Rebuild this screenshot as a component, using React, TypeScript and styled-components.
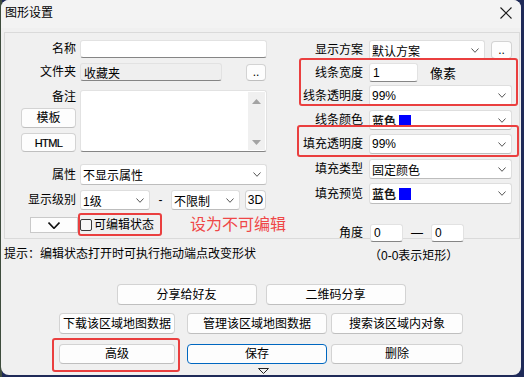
import React from 'react';
import styled, { createGlobalStyle, css } from 'styled-components';

const Global = createGlobalStyle`
  html, body { margin: 0; padding: 0; }
  body {
    width: 524px; height: 377px; overflow: hidden;
    background: linear-gradient(to right, #3e4c3d 0, #3e4c3d 2px, #1f2a58 2px);
    font-family: "Liberation Sans", "Noto Sans CJK SC", sans-serif;
    font-size: 12px; color: #000;
  }
  * { box-sizing: border-box; }
`;

const Window = styled.div`
  width: 520px; height: 375px; margin-left: 1px;
  background: #f0f0f0; border-radius: 8px; overflow: hidden;
  display: flex; flex-direction: column;
`;

const TitleBar = styled.div`
  height: 28px; flex: none; display: flex; align-items: center; justify-content: space-between;
  padding: 0 9px 2px 4px; background: #f3f3f3;
`;

const Title = styled.span`font-size: 12px; line-height: 14px;`;

const Panel = styled.div`
  height: 207px; flex: none; margin: 4px 1px 0 3px;
  border: 1px solid #dadada; display: flex; padding-top: 7px;
`;

const Column = styled.div<{ $w: number; $ml: number }>`
  width: ${p => p.$w}px; margin-left: ${p => p.$ml}px; flex: none;
  display: flex; flex-direction: column;
`;

const Row = styled.div<{ $mt: number; $h: number }>`
  display: flex; align-items: center; flex: none;
  height: ${p => p.$h}px; margin-top: ${p => p.$mt}px;
`;

const Label = styled.div<{ $w: number; $gap: number }>`
  width: ${p => p.$w}px; margin-right: ${p => p.$gap}px; flex: none;
  text-align: right; white-space: nowrap; line-height: 14px;
`;

const LabelStack = styled.div`
  width: 71px; margin-right: 4px; flex: none; height: 100%;
  display: flex; flex-direction: column; align-items: flex-end;
`;

const Field = styled.div<{ $w: number; $readonly?: boolean }>`
  width: ${p => p.$w}px; height: 100%; flex: none;
  background: ${p => (p.$readonly ? '#efefef' : '#ffffff')};
  border: 1px solid #e2e2e2; border-bottom-color: #858585; border-radius: 3px;
  padding-left: 3px; display: flex; align-items: center; white-space: nowrap;
`;

const SelectBox = styled.div<{ $w: number }>`
  width: ${p => p.$w}px; height: 100%; flex: none;
  background: #fff; border: 1px solid #dedede; border-bottom-color: #bdbdbd; border-radius: 3px;
  display: flex; align-items: center; justify-content: space-between;
  padding: 0 5px 0 2px; white-space: nowrap;
`;

const ColorName = styled.span`font-weight: 600; color: #1a1a1a;`;

const Swatch = styled.span`
  display: inline-block; width: 12px; height: 12px; background: #0000ff; margin-left: 3px; vertical-align: -1px;
`;

const Btn = styled.button<{ $w: number; $h: number; $ml?: number; $primary?: boolean }>`
  width: ${p => p.$w}px; height: ${p => p.$h}px; margin: 0 0 0 ${p => p.$ml ?? 0}px; flex: none;
  padding: 0; font: inherit; color: #000; line-height: 14px;
  background: #fdfdfd; border: 1px solid #d3d3d3; border-bottom-color: #bfbfbf; border-radius: 4px;
  display: flex; align-items: center; justify-content: center;
  ${p => p.$primary && css`border-color: #0067c0;`}
`;

const SmallText = styled.span`font-size: 11px; letter-spacing: -0.6px; -webkit-text-stroke: 0.2px #000;`;

const NoteArea = styled.div`
  width: 187px; height: 100%; flex: none; background: #fff;
  border: 1px solid #e2e2e2; border-bottom-color: #858585; border-radius: 3px;
  display: flex; justify-content: flex-end; padding: 1px 1px 1px 0;
`;

const ScrollBar = styled.div`
  width: 17px; height: 100%; background: #f0f0f0;
  display: flex; flex-direction: column; justify-content: space-between; align-items: center;
  padding: 7px 0 5px;
`;

const Dash = styled.div<{ $w: number }>`
  width: ${p => p.$w}px; flex: none; text-align: center;
`;

const DropButton = styled.div`
  width: 48px; height: 100%; margin-left: 25px; flex: none;
  border: 1px solid #c9c9c9; background: #fdfdfd;
  display: flex; align-items: center; justify-content: center;
`;

const Marked = styled.div<{ $t: number; $r: number; $b: number; $l: number; $ml?: number }>`
  position: relative; display: flex; align-items: center; flex: none;
  margin-left: ${p => p.$ml ?? 0}px;
  &::after {
    content: ''; position: absolute; pointer-events: none;
    top: ${p => p.$t}px; right: ${p => p.$r}px; bottom: ${p => p.$b}px; left: ${p => p.$l}px;
    border: 2px solid #ea3f3f; border-radius: 3px;
  }
`;

const Group = styled(Marked)`flex-direction: column; align-items: stretch;`;

const CheckBox = styled.span`
  width: 12px; height: 12px; flex: none; border: 1px solid #3a3a3a; border-radius: 2px; background: #f7f7f7;
`;

const CheckText = styled.span`margin-left: 2px; white-space: nowrap; line-height: 14px;`;

const WarnText = styled.span`
  margin-left: 36px; font-size: 16px; color: #ef4747; white-space: nowrap; flex: none; line-height: 18px;
`;

const Unit = styled.span`margin-left: 12px; font-size: 13px;`;

const HintRow = styled.div`
  height: 18px; margin-top: 6px; flex: none; padding-left: 3px;
  display: grid; grid-template-columns: 365px auto; align-items: center;
`;

const HintText = styled.span`white-space: nowrap; line-height: 14px;`;
const NoteText = styled.span`white-space: nowrap; line-height: 14px; padding-top: 4px;`;

const ButtonRow = styled.div<{ $mt: number; $center?: boolean }>`
  display: flex; flex: none; margin-top: ${p => p.$mt}px;
  padding-left: ${p => (p.$center ? 0 : 58)}px;
  justify-content: ${p => (p.$center ? 'center' : 'flex-start')};
  gap: ${p => (p.$center ? 9 : 0)}px;
`;

const MoreRow = styled.div`
  display: flex; flex: none; padding-left: 257px; margin-top: 4px;
`;

const Chevron = ({ w = 8, h = 5, sw = 1, color = '#555' }: { w?: number; h?: number; sw?: number; color?: string }) => (
  <svg width={w} height={h} viewBox={`0 0 ${w} ${h}`}>
    <path d={`M0.5 0.5 L${w / 2} ${h - 0.7} L${w - 0.5} 0.5`} fill="none" stroke={color} strokeWidth={sw} />
  </svg>
);

const Triangle = ({ up }: { up?: boolean }) => (
  <svg width="9" height="5" viewBox="0 0 9 5">
    <path d={up ? 'M0 5 L4.5 0 L9 5 Z' : 'M0 0 L4.5 5 L9 0 Z'} fill="#a3a3a3" />
  </svg>
);

const Select = ({ w, children }: { w: number; children: React.ReactNode }) => (
  <SelectBox $w={w}>
    <span>{children}</span>
    <Chevron />
  </SelectBox>
);

const Blue = () => (
  <>
    <ColorName>蓝色</ColorName>
    <Swatch />
  </>
);

export default function App() {
  return (
    <>
      <Global />
      <Window>
        <TitleBar>
          <Title>图形设置</Title>
          <svg width="12" height="12" viewBox="0 0 12 12">
            <path d="M0.5 0.5 L11.5 11.5 M11.5 0.5 L0.5 11.5" stroke="#1a1a1a" strokeWidth="1.1" />
          </svg>
        </TitleBar>

        <Panel>
          <Column $w={262} $ml={0}>
            <Row $mt={0} $h={18}>
              <Label $w={71} $gap={4}>名称</Label>
              <Field $w={187} />
            </Row>
            <Row $mt={5} $h={18}>
              <Label $w={71} $gap={4}>文件夹</Label>
              <Field $w={142} $readonly>收藏夹</Field>
              <Btn $w={20} $h={17} $ml={24}>..</Btn>
            </Row>
            <Row $mt={9} $h={62}>
              <LabelStack>
                <Label $w={71} $gap={0}>备注</Label>
                <Btn $w={55} $h={20} $ml={0} style={{ marginTop: 4 }}>模板</Btn>
                <Btn $w={55} $h={19} $ml={0} style={{ marginTop: 5 }}><SmallText>HTML</SmallText></Btn>
              </LabelStack>
              <NoteArea>
                <ScrollBar>
                  <Triangle up />
                  <Triangle />
                </ScrollBar>
              </NoteArea>
            </Row>
            <Row $mt={12} $h={21}>
              <Label $w={71} $gap={4}>属性</Label>
              <Select w={187}>不显示属性</Select>
            </Row>
            <Row $mt={5} $h={20}>
              <Label $w={71} $gap={4}>显示级别</Label>
              <Select w={70}>1级</Select>
              <Dash $w={21}>-</Dash>
              <Select w={69}>不限制</Select>
              <Btn $w={21} $h={20} $ml={5}>3D</Btn>
            </Row>
            <Row $mt={7} $h={16}>
              <DropButton>
                <Chevron w={12} h={7} sw={1.6} color="#111" />
              </DropButton>
              <Marked $t={-5} $r={-8} $b={-4} $l={-2} $ml={2}>
                <CheckBox />
                <CheckText>可编辑状态</CheckText>
              </Marked>
              <WarnText>设为不可编辑</WarnText>
            </Row>
          </Column>

          <Column $w={232} $ml={13}>
            <Row $mt={0} $h={20}>
              <Label $w={83} $gap={6}>显示方案</Label>
              <Select w={116}>默认方案</Select>
              <Btn $w={21} $h={18} $ml={6}>..</Btn>
            </Row>
            <Group $t={-2} $r={-6} $b={0} $l={19}>
              <Row $mt={3} $h={19}>
                <Label $w={83} $gap={6}>线条宽度</Label>
                <Field $w={49}>1</Field>
                <Unit>像素</Unit>
              </Row>
              <Row $mt={3} $h={21}>
                <Label $w={83} $gap={6}>线条透明度</Label>
                <Select w={143}>99%</Select>
              </Row>
            </Group>
            <Row $mt={4} $h={20}>
              <Label $w={83} $gap={6}>线条颜色</Label>
              <Select w={143}><Blue /></Select>
            </Row>
            <Group $t={-5} $r={-7} $b={-3} $l={17}>
              <Row $mt={4} $h={20}>
                <Label $w={83} $gap={6}>填充透明度</Label>
                <Select w={143}>99%</Select>
              </Row>
            </Group>
            <Row $mt={5} $h={20}>
              <Label $w={83} $gap={6}>填充类型</Label>
              <Select w={143}>固定颜色</Select>
            </Row>
            <Row $mt={4} $h={21}>
              <Label $w={83} $gap={6}>填充预览</Label>
              <Select w={143}><Blue /></Select>
            </Row>
            <Row $mt={20} $h={18}>
              <Label $w={83} $gap={7}>角度</Label>
              <Field $w={33}>0</Field>
              <Dash $w={28}>—</Dash>
              <Field $w={33}>0</Field>
            </Row>
          </Column>
        </Panel>

        <HintRow>
          <HintText>提示：编辑状态打开时可执行拖动端点改变形状</HintText>
          <NoteText>（0-0表示矩形）</NoteText>
        </HintRow>

        <ButtonRow $mt={21} $center>
          <Btn $w={140} $h={21}>分享给好友</Btn>
          <Btn $w={140} $h={21}>二维码分享</Btn>
        </ButtonRow>
        <ButtonRow $mt={8}>
          <Btn $w={116} $h={21}>下载该区域地图数据</Btn>
          <Btn $w={140} $h={21} $ml={12}>管理该区域地图数据</Btn>
          <Btn $w={132} $h={21} $ml={4}>搜索该区域内对象</Btn>
        </ButtonRow>
        <ButtonRow $mt={10}>
          <Marked $t={-6} $r={-5} $b={-8} $l={-7}>
            <Btn $w={116} $h={20}>高级</Btn>
          </Marked>
          <Btn $w={140} $h={20} $ml={12} $primary>保存</Btn>
          <Btn $w={132} $h={20} $ml={4}>删除</Btn>
        </ButtonRow>
        <MoreRow>
          <svg width="11" height="6" viewBox="0 0 11 6">
            <path d="M0.5 0.5 L5.5 5.5 L10.5 0.5 Z" fill="none" stroke="#222" strokeWidth="1" />
          </svg>
        </MoreRow>
      </Window>
    </>
  );
}
